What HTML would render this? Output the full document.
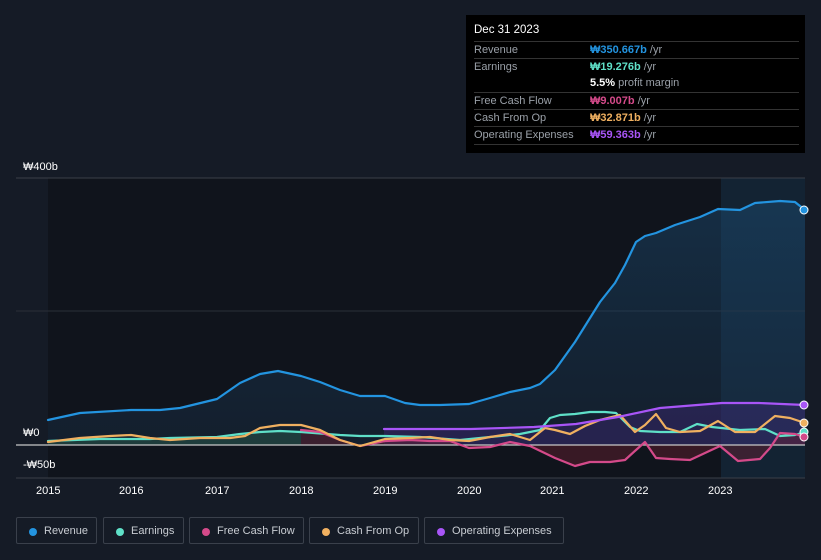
<!DOCTYPE html>
<html><head><meta charset="utf-8"><style>
body{margin:0;width:821px;height:560px;background:#151b26;font-family:"Liberation Sans",sans-serif;overflow:hidden;position:relative}
.tt{position:absolute;left:466px;top:15px;width:339px;height:138px;background:#000;color:#9aa0a8;font-size:11px}
.tt .h{position:absolute;left:8px;top:9px;color:#fff;font-size:11.5px}
.row{position:absolute;left:8px;width:325px;border-top:1px solid #333;height:16px;line-height:16px}
.row span.v{position:absolute;left:116px}
.row b{font-weight:bold}
.lg{position:absolute;top:517px;height:27px;border:1px solid #3a404b;border-radius:2px;color:#c8ccd2;font-size:11px;line-height:27px;box-sizing:border-box;padding-left:27px}
.lg i{position:absolute;left:12px;top:10px;width:8px;height:8px;border-radius:50%}
.ax{position:absolute;color:#fff;font-size:11px}
</style></head><body>
<svg width="821" height="560" style="position:absolute;left:0;top:0">
<defs><linearGradient id="rg" x1="0" y1="0" x2="0" y2="1"><stop offset="0" stop-color="#1c4f78" stop-opacity=".8"/><stop offset="1" stop-color="#1a3550" stop-opacity=".6"/></linearGradient></defs>
<rect x="48" y="178" width="757" height="300" fill="#10141c"/>
<rect x="721" y="178" width="84" height="300" fill="#16324a" opacity=".5"/>
<line x1="16" y1="178" x2="805" y2="178" stroke="#3a3f48"/>
<line x1="16" y1="311" x2="805" y2="311" stroke="#2a2f38"/>
<line x1="16" y1="478" x2="805" y2="478" stroke="#3a3f48"/>
<path d="M48,420 L80,413 L131,410 L160,410 L180,408 L217,399 L240,383 L260,374 L278,371 L301,376 L320,382 L340,390 L360,396 L385,396 L405,403 L420,405 L440,405 L469,404 L490,398 L510,392 L530,388 L540,384 L555,370 L575,342 L590,318 L600,302 L615,283 L625,265 L636,242 L645,236 L656,233 L675,225 L700,217 L718,209 L740,210 L755,203 L780,201 L795,202 L805,210 L805,445 L48,445Z" fill="url(#rg)" opacity=".55"/>
<path d="M384,429 L471,429 L534,427 L576,424 L618,417 L660,408 L722,403 L759,403 L805,405 L805,445 L384,445Z" fill="#4a2a8a" opacity=".35"/>
<path d="M301,430 L320,432 L340,440 L360,446 L385,441 L410,440 L430,441 L450,441 L469,448 L490,447 L510,442 L530,446 L555,458 L575,466 L590,462 L610,462 L625,460 L636,450 L645,442 L656,458 L670,459 L690,460 L720,446 L738,461 L760,459 L770,448 L780,433 L805,437 L805,445 L301,445Z" fill="#6a2030" opacity=".45"/>
<path d="M48,441 L100,439 L217,437 L260,432 L301,432 L301,445 L48,445Z" fill="#2a5a4a" opacity=".5"/>
<line x1="16" y1="445" x2="805" y2="445" stroke="#c8c8c8" stroke-width="1.2"/>
<g fill="none" stroke-width="2.2" stroke-linejoin="round" stroke-linecap="round">
<path d="M48,441 L100,439 L150,439 L170,438 L217,437 L240,434 L260,432 L280,431 L301,432 L340,435 L360,436 L385,436 L420,437 L460,440 L490,437 L520,434 L540,430 L550,418 L560,415 L575,414 L590,412 L605,412 L616,413 L630,427 L640,431 L660,432 L680,432 L697,424 L712,427 L740,430 L765,429 L780,436 L795,435 L805,432" stroke="#5fe0c8"/>
<path d="M301,430 L320,432 L340,440 L360,446 L385,441 L410,440 L430,441 L450,441 L469,448 L490,447 L510,442 L530,446 L555,458 L575,466 L590,462 L610,462 L625,460 L636,450 L645,442 L656,458 L670,459 L690,460 L720,446 L738,461 L760,459 L770,448 L780,433 L795,434 L805,437" stroke="#d44a8a"/>
<path d="M48,442 L80,438 L110,436 L131,435 L150,438 L170,440 L200,438 L230,438 L245,436 L260,428 L280,425 L301,425 L320,430 L340,440 L360,446 L385,439 L410,438 L430,437 L450,440 L469,441 L490,437 L510,434 L530,440 L545,428 L555,430 L570,434 L585,426 L600,420 L620,415 L635,432 L645,425 L656,414 L666,428 L680,432 L700,431 L718,421 L735,432 L755,432 L775,416 L790,418 L805,423" stroke="#f0b060"/>
<path d="M384,429 L471,429 L534,427 L576,424 L618,417 L660,408 L722,403 L759,403 L805,405" stroke="#a855f7"/>
<path d="M48,420 L80,413 L131,410 L160,410 L180,408 L217,399 L240,383 L260,374 L278,371 L301,376 L320,382 L340,390 L360,396 L385,396 L405,403 L420,405 L440,405 L469,404 L490,398 L510,392 L530,388 L540,384 L555,370 L575,342 L590,318 L600,302 L615,283 L625,265 L636,242 L645,236 L656,233 L675,225 L700,217 L718,209 L740,210 L755,203 L780,201 L795,202 L805,210" stroke="#2394e0"/>
</g>
<g stroke="#fff" stroke-width="1"><circle cx="804" cy="210" r="4" fill="#2394e0"/><circle cx="804" cy="405" r="4" fill="#a855f7"/><circle cx="804" cy="423" r="4" fill="#f0b060"/><circle cx="804" cy="432" r="4" fill="#5fe0c8"/><circle cx="804" cy="437" r="4" fill="#d44a8a"/></g>
</svg>
<div class="ax" style="left:23px;top:161px">₩400b</div>
<div class="ax" style="left:23px;top:427px">₩0</div>
<div class="ax" style="left:23px;top:459px">-₩50b</div>
<div class="ax" style="left:36px;top:485px">2015</div><div class="ax" style="left:119px;top:485px">2016</div><div class="ax" style="left:205px;top:485px">2017</div><div class="ax" style="left:289px;top:485px">2018</div><div class="ax" style="left:373px;top:485px">2019</div><div class="ax" style="left:457px;top:485px">2020</div><div class="ax" style="left:540px;top:485px">2021</div><div class="ax" style="left:624px;top:485px">2022</div><div class="ax" style="left:708px;top:485px">2023</div>
<div class="tt"><div class="h">Dec 31 2023</div>
<div class="row" style="top:26px">Revenue<span class="v"><b style="color:#2394e0">₩350.667b</b> /yr</span></div>
<div class="row" style="top:43px">Earnings<span class="v"><b style="color:#5fe0c8">₩19.276b</b> /yr</span></div>
<div class="row" style="top:60px;border:none"><span class="v"><b style="color:#fff">5.5%</b> profit margin</span></div>
<div class="row" style="top:77px">Free Cash Flow<span class="v"><b style="color:#d44a8a">₩9.007b</b> /yr</span></div>
<div class="row" style="top:94px">Cash From Op<span class="v"><b style="color:#f0b060">₩32.871b</b> /yr</span></div>
<div class="row" style="top:111px">Operating Expenses<span class="v"><b style="color:#a855f7">₩59.363b</b> /yr</span></div>
<div class="row" style="top:129px;height:0"></div>
</div>
<div class="lg" style="left:16px;width:81px"><i style="background:#2394e0"></i>Revenue</div>
<div class="lg" style="left:103px;width:81px"><i style="background:#5fe0c8"></i>Earnings</div>
<div class="lg" style="left:189px;width:115px"><i style="background:#d44a8a"></i>Free Cash Flow</div>
<div class="lg" style="left:309px;width:110px"><i style="background:#f0b060"></i>Cash From Op</div>
<div class="lg" style="left:424px;width:140px"><i style="background:#a855f7"></i>Operating Expenses</div>
</body></html>
